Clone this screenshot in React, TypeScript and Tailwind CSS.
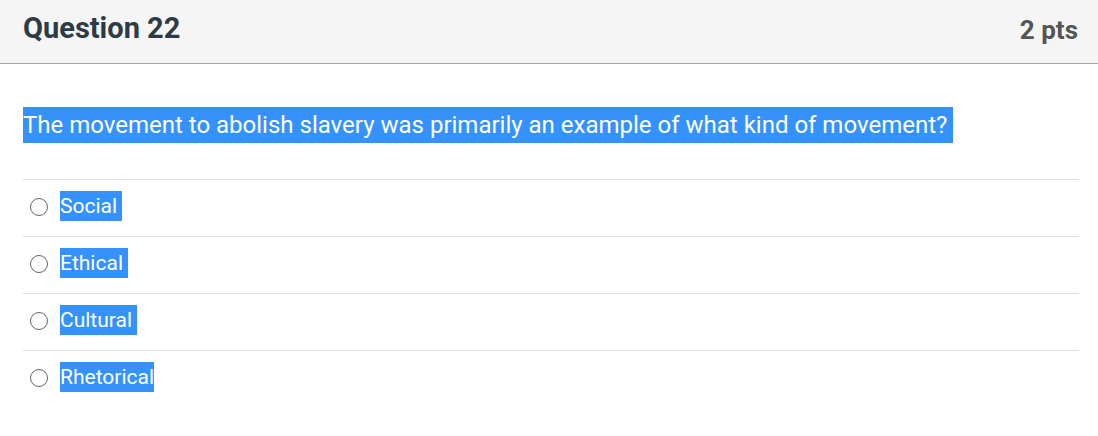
const options = ['Social ', 'Ethical ', 'Cultural ', 'Rhetorical'];

const Radio = () => (
    <span className="inline-block w-[18px] h-[18px] rounded-full border-[1.5px] border-[#666666] bg-white shrink-0" />
);

export default function App() {
    return (
        <div className="min-h-screen bg-white" style={{ fontFamily: 'Roboto, "Liberation Sans", sans-serif' }}>
            <div className="h-[64px] bg-[#f5f5f5] border-b border-[#a8a8a8] flex items-center justify-between pl-[23px] pr-[20px]">
                <h2 className="text-[29px] font-bold text-[#2d3b45] leading-none -mt-[6px]">Question 22</h2>
                <span className="text-[26px] font-bold text-[#555555] leading-none -mt-[4px]">2 pts</span>
            </div>

            <div className="pl-[23px] pr-[19px]">
                <div className="pt-[43px] pb-[36px]">
                    <span className="inline-block bg-[#3592fd] text-white text-[24px] leading-[36px] whitespace-pre">
                        The movement to abolish slavery was primarily an example of what kind of movement?{' '}
                    </span>
                </div>

                <div>
                    {options.map((opt) => (
                        <div key={opt} className="border-t border-[#dddddd] flex items-center pt-[11px] pb-[15px]">
                            <div className="w-[37px] flex justify-start pl-[7px] pt-[2px]">
                                <Radio />
                            </div>
                            <span className="inline-block bg-[#3592fd] text-white text-[21px] leading-[30px] whitespace-pre">
                                {opt}
                            </span>
                        </div>
                    ))}
                </div>
            </div>
        </div>
    );
}
